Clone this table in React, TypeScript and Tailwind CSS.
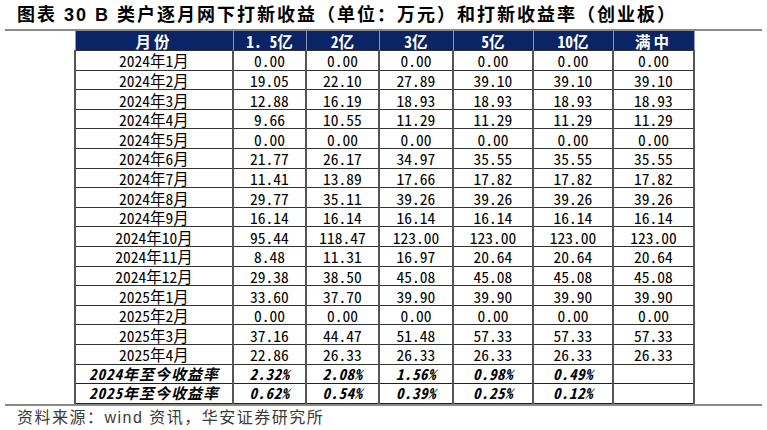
const cols = ["1.5亿", "2亿", "3亿", "5亿", "10亿", "满中"];

const rows: [string, string[]][] = [
  ["2024年1月", ["0.00", "0.00", "0.00", "0.00", "0.00", "0.00"]],
  ["2024年2月", ["19.05", "22.10", "27.89", "39.10", "39.10", "39.10"]],
  ["2024年3月", ["12.88", "16.19", "18.93", "18.93", "18.93", "18.93"]],
  ["2024年4月", ["9.66", "10.55", "11.29", "11.29", "11.29", "11.29"]],
  ["2024年5月", ["0.00", "0.00", "0.00", "0.00", "0.00", "0.00"]],
  ["2024年6月", ["21.77", "26.17", "34.97", "35.55", "35.55", "35.55"]],
  ["2024年7月", ["11.41", "13.89", "17.66", "17.82", "17.82", "17.82"]],
  ["2024年8月", ["29.77", "35.11", "39.26", "39.26", "39.26", "39.26"]],
  ["2024年9月", ["16.14", "16.14", "16.14", "16.14", "16.14", "16.14"]],
  ["2024年10月", ["95.44", "118.47", "123.00", "123.00", "123.00", "123.00"]],
  ["2024年11月", ["8.48", "11.31", "16.97", "20.64", "20.64", "20.64"]],
  ["2024年12月", ["29.38", "38.50", "45.08", "45.08", "45.08", "45.08"]],
  ["2025年1月", ["33.60", "37.70", "39.90", "39.90", "39.90", "39.90"]],
  ["2025年2月", ["0.00", "0.00", "0.00", "0.00", "0.00", "0.00"]],
  ["2025年3月", ["37.16", "44.47", "51.48", "57.33", "57.33", "57.33"]],
  ["2025年4月", ["22.86", "26.33", "26.33", "26.33", "26.33", "26.33"]],
];

const summary: [string, string[]][] = [
  ["2024年至今收益率", ["2.32%", "2.08%", "1.56%", "0.98%", "0.49%", ""]],
  ["2025年至今收益率", ["0.62%", "0.54%", "0.39%", "0.25%", "0.12%", ""]],
];

const widths = ["w-[73px]", "w-[73px]", "w-[74px]", "w-[80px]", "w-[80px]", "w-[81px]"];

const cellFont = { fontFamily: '"Noto Sans Mono CJK SC", "Noto Sans CJK SC", "DejaVu Sans Mono", monospace' };

export default function App() {
  return (
    <div className="w-[767px] h-[430px] bg-white text-black overflow-hidden">
      <div
        className="h-[29px] pl-[17px] flex items-center text-[18px] font-bold tracking-[2px] leading-none"
        style={{ fontFamily: '"Liberation Sans", "Noto Sans CJK SC", sans-serif' }}
      >
        图表 30 B 类户逐月网下打新收益（单位：万元）和打新收益率（创业板）
      </div>
      <div className="mx-[5px] border-t-2 border-[#8a8a8a]" />
      <table className="ml-[74px] border-collapse table-fixed w-[619px]" style={cellFont}>
        <thead>
          <tr className="h-[19.6px] bg-[#0b2466] text-white font-bold text-[15.5px] leading-[16px]">
            <th className="w-[158px] p-0 border-x border-[#8d97b3] font-bold tracking-[3px]">月份</th>
            {cols.map((c, i) => (
              <th key={c} className={`${widths[i]} p-0 border-x border-[#8d97b3] font-bold ${c === "满中" ? "tracking-[3px]" : ""}`}>
                {c === "1.5亿" ? "1. 5亿" : c}
              </th>
            ))}
          </tr>
        </thead>
        <tbody className="text-[15.5px] leading-[16px]">
          {rows.map(([m, vals]) => (
            <tr key={m} className="h-[19.6px]">
              <td className="p-0 text-center border border-[#333] border-x-2 border-x-[#555]">{m}</td>
              {vals.map((v, i) => (
                <td key={i} className="p-0 text-center border border-[#333] border-x-2 border-x-[#555]">
                  {v}
                </td>
              ))}
            </tr>
          ))}
          {summary.map(([m, vals]) => (
            <tr key={m} className="h-[19.6px] italic font-bold text-[15px]">
              <td className="p-0 text-center border border-[#222] border-x-2 border-x-[#555] tracking-[1px]">{m}</td>
              {vals.map((v, i) => (
                <td key={i} className="p-0 text-center border border-[#222] border-x-2 border-x-[#555] tracking-[0.5px]">
                  {v}
                </td>
              ))}
            </tr>
          ))}
        </tbody>
      </table>
      <div className="mx-[5px] border-t-2 border-[#8a8a8a]" />
      <div
        className="pl-[17px] pt-[2px] text-[16px] leading-[20px] text-[#3a3a3a] tracking-[1.5px]"
        style={{ fontFamily: '"Liberation Sans", "Noto Sans CJK SC", sans-serif' }}
      >
        资料来源：wind 资讯，华安证券研究所
      </div>
    </div>
  );
}
